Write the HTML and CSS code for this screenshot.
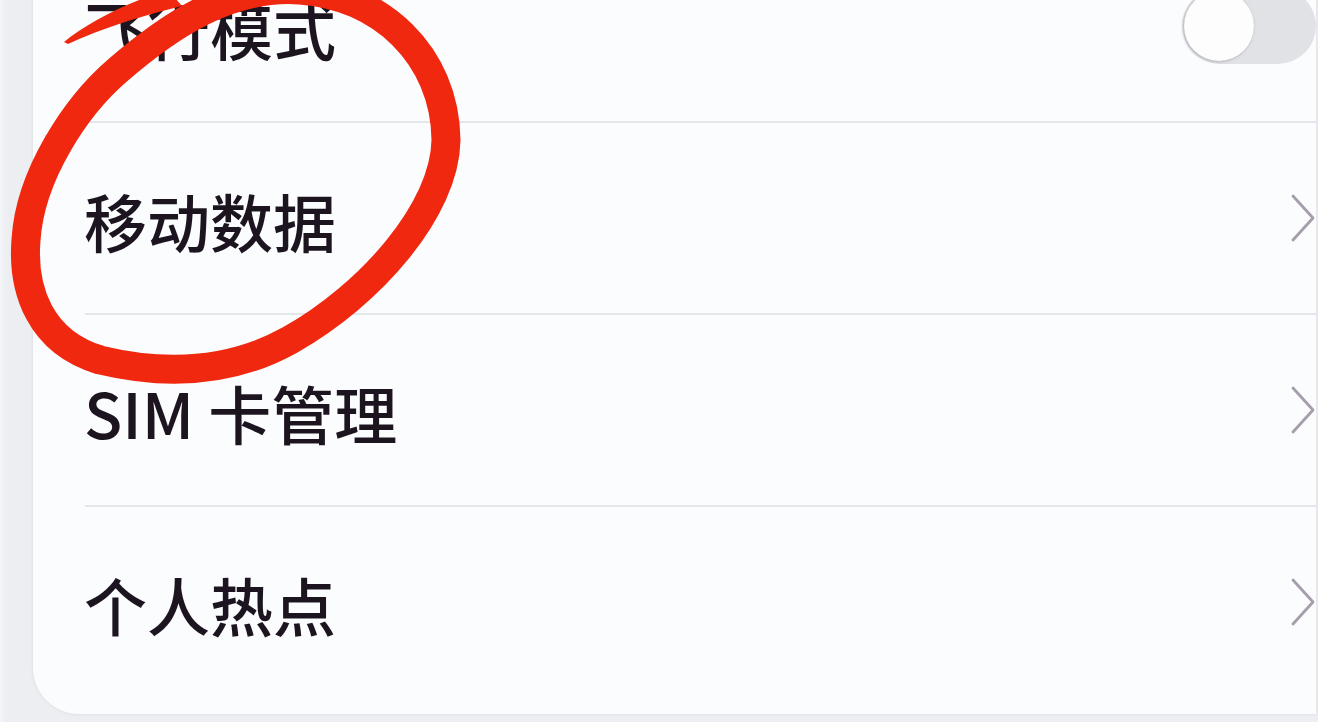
FILE: index.html
```html
<!DOCTYPE html>
<html lang="zh-CN">
<head>
<meta charset="utf-8">
<title>设置</title>
<link rel="stylesheet" href="styles.css">
</head>
<body>
<div class="page">
  <div class="card">
    <div class="row">
      <span class="label">飞行模式</span>
      <span class="switch"><span class="knob"></span></span>
    </div>
    <div class="divider"></div>
    <div class="row">
      <span class="label">移动数据</span>
      <svg class="chev" viewBox="0 0 24 48" width="24" height="48"><path d="M2 2 L22 24 L2 46"/></svg>
    </div>
    <div class="divider"></div>
    <div class="row">
      <span class="label">SIM 卡管理</span>
      <svg class="chev" viewBox="0 0 24 48" width="24" height="48"><path d="M2 2 L22 24 L2 46"/></svg>
    </div>
    <div class="divider"></div>
    <div class="row">
      <span class="label">个人热点</span>
      <svg class="chev" viewBox="0 0 24 48" width="24" height="48"><path d="M2 2 L22 24 L2 46"/></svg>
    </div>
  </div>
  <svg class="mark" viewBox="0 0 480 400" width="480" height="400">
    <path class="ring" d="M 118 70 C 170 25, 230 -15, 300 -10 C 380 -5, 445 55, 446 140 C 445 210, 370 295, 290 340 C 220 379, 150 372, 100 360 C 40 342, 22 290, 26 240 C 30 175, 76 106, 118 70 Z"/>
    <path class="tail" d="M64 42 C 88 22, 128 2, 168 -10 L 182 6 C 140 16, 98 30, 68 44 Z"/>
  </svg>
</div>
</body>
</html>
```
FILE: styles.css
```css
html, body {
  margin: 0;
  padding: 0;
}
body {
  background: #eceef1;
  width: 1318px;
  height: 722px;
  overflow: hidden;
  font-family: "Noto Sans CJK SC", "Noto Sans", sans-serif;
}
.page {
  position: relative;
  width: 1318px;
  height: 722px;
  overflow: hidden;
  background: linear-gradient(90deg, #f4f5f7 0px, #eceef1 6px, #eceef1 100%);
}
.card {
  margin-top: -69px;
  margin-left: 33px;
  width: 1283px;
  background: #fbfcfe;
  border-bottom-left-radius: 46px;
  padding-bottom: 17px;
  box-shadow: 0 0 3px rgba(200, 204, 210, 0.6);
}
.row {
  height: 190px;
  display: flex;
  align-items: center;
  justify-content: space-between;
  padding-left: 51px;
  padding-right: 1px;
  box-sizing: border-box;
}
.label {
  font-size: 63px;
  line-height: 1;
  color: #1c1520;
  font-weight: 500;
  padding-top: 3px;
}
.divider {
  height: 2px;
  margin-left: 52px;
  background: #e3e6ea;
}
.chev {
  display: block;
  margin-top: 0;
}
.chev path {
  fill: none;
  stroke: #a49eab;
  stroke-width: 2.8;
  stroke-linecap: round;
  stroke-linejoin: round;
}
.switch {
  display: flex;
  align-items: center;
  width: 134px;
  height: 76px;
  border-radius: 38px;
  background: #e1e2e5;
  margin-top: 0;
  margin-right: -1px;
  box-sizing: border-box;
  padding-left: 2px;
}
.knob {
  width: 70px;
  height: 70px;
  border-radius: 50%;
  background: #fdfdfe;
  box-shadow: -1px 1px 3px rgba(150, 152, 158, 0.6), 0 0 1px rgba(150, 152, 158, 0.5);
}
.mark {
  position: absolute;
  left: 0;
  top: 0;
  overflow: visible;
}
.ring {
  fill: none;
  stroke: #f0280f;
  stroke-width: 29;
  stroke-linejoin: round;
}
.tail {
  fill: #f0280f;
}
```
